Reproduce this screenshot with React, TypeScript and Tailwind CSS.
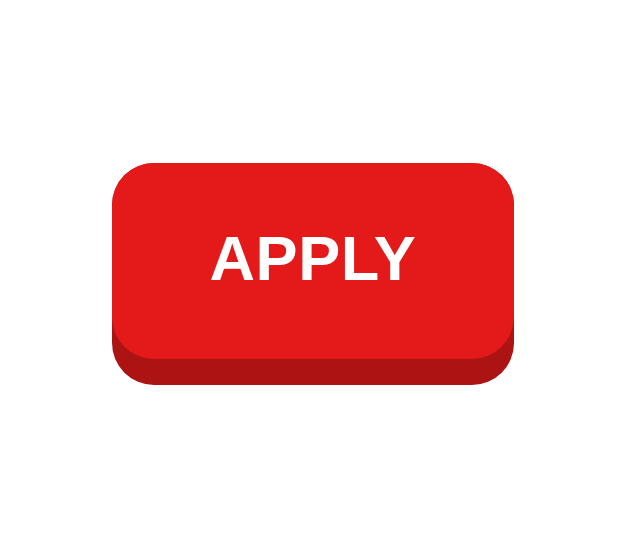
import React from 'react'

/* Flat 3D "APPLY" button, centred on a white page */
export default function App() {
  return (
    <div className="w-full h-[548px] bg-white flex items-center justify-center">
      <button
        type="button"
        className="w-[402px] h-[222px] rounded-[42px] bg-[#ac1313] flex flex-col"
      >
        <span className="h-[196px] w-full rounded-[42px] bg-[#e3191a] flex items-center justify-center pb-[6px]">
          <span
            className="text-white font-bold text-[63px] leading-none tracking-[0.5px]"
            style={{ fontFamily: '"Liberation Sans", Arial, sans-serif' }}
          >
            APPLY
          </span>
        </span>
      </button>
    </div>
  )
}
